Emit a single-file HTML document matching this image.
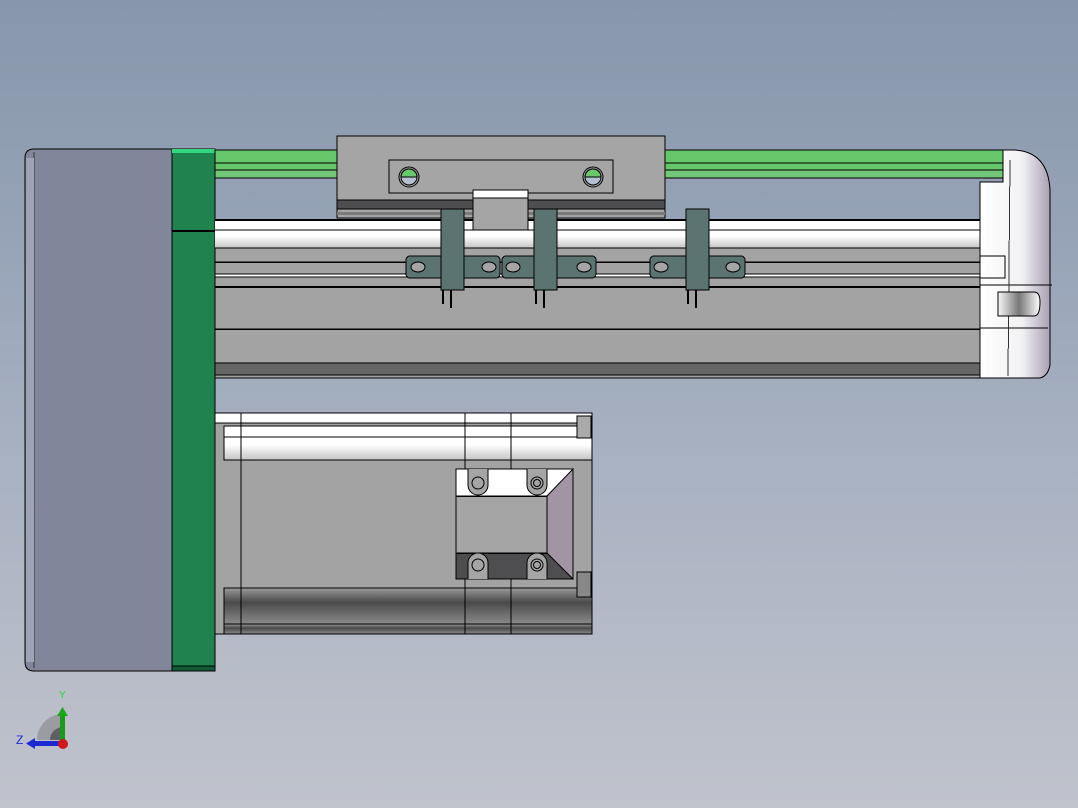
<!DOCTYPE html>
<html><head><style>
html,body{margin:0;padding:0;width:1078px;height:808px;overflow:hidden}
body{background:linear-gradient(#8796ab 0%,#97a4b7 30%,#aab3c3 60%,#c0c3cc 100%)}
svg{display:block}
text{font-family:"Liberation Sans",sans-serif}
rect,line{shape-rendering:crispEdges}
</style></head><body>
<svg width="1078" height="808" viewBox="0 0 1078 808" xmlns="http://www.w3.org/2000/svg">
<defs>
<linearGradient id="wb" x1="0" y1="0" x2="0" y2="1"><stop offset="0" stop-color="#fff"/><stop offset="0.55" stop-color="#fff"/><stop offset="1" stop-color="#c4c4c4"/></linearGradient>
<linearGradient id="dk" x1="0" y1="0" x2="0" y2="1"><stop offset="0" stop-color="#9a9a9a"/><stop offset="0.4" stop-color="#4a4a4a"/><stop offset="1" stop-color="#8a8a8a"/></linearGradient>
<linearGradient id="cap" x1="0" y1="0" x2="1" y2="0"><stop offset="0" stop-color="#fff"/><stop offset="0.6" stop-color="#f2f2f4"/><stop offset="1" stop-color="#a99fb3"/></linearGradient>
<linearGradient id="cyl" x1="0" y1="0" x2="1" y2="0"><stop offset="0" stop-color="#f8f8f8"/><stop offset="0.5" stop-color="#777"/><stop offset="1" stop-color="#fff"/></linearGradient>
</defs>
<g stroke="#000" stroke-width="1">
<path d="M34 149 H172 V671 H34 Q25 671 25 662 V158 Q25 149 34 149 Z" fill="#82869a"/>
<line x1="34" y1="152" x2="34" y2="668" stroke="#333"/>
<rect x="26" y="158" width="8" height="504" fill="#9ea3b6" stroke="none"/>
<rect x="172" y="149" width="43" height="522" fill="#20824f"/>
<rect x="172" y="149" width="43" height="4" fill="#33d67e" stroke="none"/>
<line x1="172" y1="231" x2="215" y2="231" stroke-width="2"/>
<rect x="172" y="666" width="43" height="5" fill="#155a37"/>
<rect x="215" y="150" width="790" height="28" fill="#66c66a"/>
<line x1="215" y1="163" x2="1005" y2="163"/>
<line x1="215" y1="170" x2="1005" y2="170"/>
<rect x="215" y="170" width="790" height="8" fill="#72c878"/>
<rect x="215" y="220" width="765" height="158" fill="#a3a3a3"/>
<rect x="215" y="221" width="765" height="27" fill="url(#wb)" stroke="none"/>
<line x1="215" y1="220" x2="980" y2="220" stroke-width="2"/>
<line x1="215" y1="230" x2="980" y2="230"/>
<line x1="215" y1="248" x2="980" y2="248"/>
<line x1="215" y1="262" x2="980" y2="262" stroke-width="1.5"/>
<rect x="215" y="274" width="765" height="3" fill="#fff"/>
<line x1="215" y1="287" x2="980" y2="287" stroke-width="2"/>
<line x1="215" y1="329" x2="980" y2="329" stroke-width="1.5"/>
<rect x="215" y="363" width="765" height="12" fill="#666"/>
<line x1="215" y1="378" x2="980" y2="378"/>
<path d="M980 182 H1003 V150 H1015 Q1048 152 1050 190 V365 Q1048 376 1040 378 H980 Z" fill="url(#cap)"/>
<rect x="980" y="256" width="25" height="22" fill="none"/>
<line x1="980" y1="285" x2="1052" y2="285"/>
<line x1="980" y1="328" x2="1048" y2="328"/>
<line x1="1010" y1="160" x2="1008" y2="376" stroke="#333"/>
<path d="M998 292 H1034 Q1040 292 1040 302 Q1040 316 1034 316 H998 Z" fill="url(#cyl)"/>
<rect x="337" y="136" width="328" height="82" fill="#a5a5a5"/>
<rect x="337" y="200" width="328" height="9" fill="#4e4e50"/>
<rect x="337" y="212" width="328" height="3" fill="#7a7a7a" stroke="none"/>
<rect x="389" y="160" width="224" height="33" fill="#a5a5a5"/>
<circle cx="409" cy="177" r="10" fill="none"/>
<circle cx="409" cy="177" r="8" fill="#b5bfd0"/>
<path d="M401 177 A8 8 0 0 1 417 177 Z" fill="#6ac86c"/>
<circle cx="593" cy="177" r="10" fill="none"/>
<circle cx="593" cy="177" r="8" fill="#b5bfd0"/>
<path d="M585 177 A8 8 0 0 1 601 177 Z" fill="#6ac86c"/>
<rect x="473" y="190" width="55" height="40" fill="#a5a5a5"/>
<rect x="473" y="190" width="55" height="8" fill="#fff"/>
<g fill="#5b7471">
<rect x="406" y="256" width="94" height="22" rx="4"/>
<rect x="502" y="256" width="94" height="22" rx="4"/>
<rect x="650" y="256" width="95" height="22" rx="4"/>
<rect x="441" y="209" width="23" height="81"/>
<rect x="534" y="209" width="23" height="81"/>
<rect x="686" y="209" width="23" height="81"/>
</g>
<g fill="#a5a5a5">
<ellipse cx="418" cy="267" rx="7" ry="5"/><ellipse cx="489" cy="267" rx="7" ry="5"/>
<ellipse cx="513" cy="267" rx="7" ry="5"/><ellipse cx="584" cy="267" rx="7" ry="5"/>
<ellipse cx="661" cy="267" rx="7" ry="5"/><ellipse cx="733" cy="267" rx="7" ry="5"/>
</g>
<g stroke-width="2">
<line x1="443" y1="290" x2="443" y2="304"/><line x1="451" y1="290" x2="451" y2="308"/>
<line x1="536" y1="290" x2="536" y2="304"/><line x1="544" y1="290" x2="544" y2="308"/>
<line x1="688" y1="290" x2="688" y2="304"/><line x1="696" y1="290" x2="696" y2="308"/>
</g>
<rect x="215" y="413" width="377" height="221" fill="#a3a3a3"/>
<rect x="224" y="426" width="368" height="34" fill="url(#wb)"/>
<rect x="215" y="413" width="377" height="10" fill="#fff"/>
<line x1="224" y1="437" x2="592" y2="437"/>
<rect x="224" y="588" width="368" height="36" fill="url(#dk)"/>
<rect x="224" y="624" width="368" height="10" fill="url(#dk)"/>
<line x1="241" y1="413" x2="241" y2="634"/>
<line x1="465" y1="413" x2="465" y2="634"/>
<line x1="511" y1="413" x2="511" y2="634"/>
<rect x="577" y="416" width="14" height="22" fill="#aaa"/>
<rect x="577" y="572" width="14" height="25" fill="#888"/>
<rect x="456" y="469" width="117" height="110" fill="#a5a5a5"/>
<rect x="456" y="469" width="117" height="27" fill="#fff"/>
<rect x="456" y="553" width="117" height="26" fill="#4e4e50"/>
<path d="M547 496 L573 469 V579 L547 553 Z" fill="#a195a3"/>
<line x1="456" y1="496" x2="547" y2="496" stroke-width="1.5"/>
<line x1="456" y1="553" x2="547" y2="553" stroke-width="1.5"/>
<g fill="#a5a5a5">
<path d="M468 469 V485 A10 10 0 0 0 488 485 V469"/>
<path d="M527 469 V485 A10 10 0 0 0 547 485 V469"/>
<path d="M468 579 V563 A10 10 0 0 1 488 563 V579"/>
<path d="M527 579 V563 A10 10 0 0 1 547 563 V579"/>
</g>
<g fill="none"><circle cx="478" cy="483" r="6"/><circle cx="537" cy="483" r="6"/><circle cx="537" cy="483" r="3.5"/><circle cx="478" cy="565" r="6"/><circle cx="537" cy="565" r="6"/><circle cx="537" cy="565" r="3.5"/></g>
</g>
<path d="M37 740 A26 26 0 0 1 63 714 V740 Z" fill="#9a9ca2"/>
<path d="M50 740 A13 13 0 0 1 63 727 V740 Z" fill="#5e6066"/>
<rect x="60" y="715" width="5" height="25" fill="#1a9a1a"/>
<path d="M57 716 L62.5 707 L68 716 Z" fill="#1aa81a"/>
<rect x="33" y="741" width="28" height="5" fill="#1a2ad0"/>
<path d="M35 738 L26 743.5 L35 749 Z" fill="#1a2ad0"/>
<circle cx="63" cy="744" r="5" fill="#d01818"/>
<text x="59" y="698" font-size="10" fill="#22dd22">Y</text>
<text x="16" y="744" font-size="12" fill="#1a2ad0">Z</text>
</svg>
</body></html>
